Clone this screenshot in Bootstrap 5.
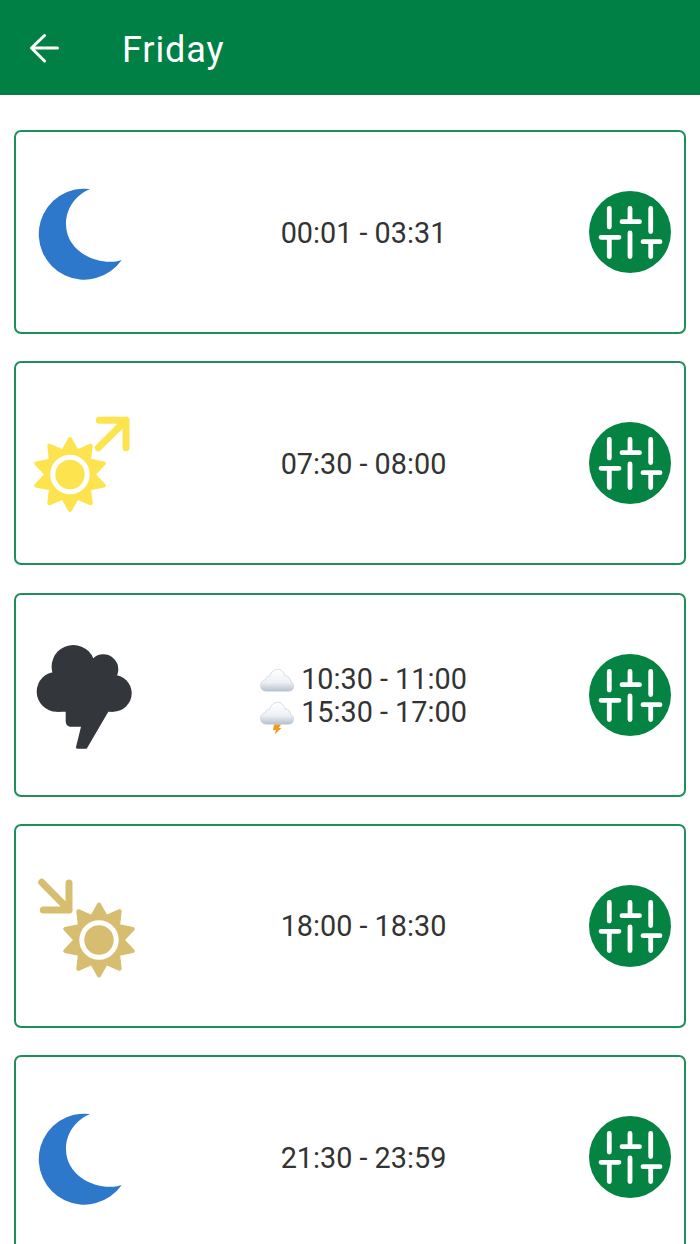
<!DOCTYPE html>
<html lang="en">
<head>
<meta charset="utf-8">
<title>Friday</title>
<link href="https://cdn.jsdelivr.net/npm/bootstrap@5.3.0/dist/css/bootstrap.min.css" rel="stylesheet">
<style>
html, body { height: 100%; overflow: hidden; }
body { font-family: Roboto, "Liberation Sans", sans-serif; background: #fff; color: #333; }
.app-bar { height: 95px; background: #008044; padding: 0; align-items: center; flex-wrap: nowrap; justify-content: flex-start; }
.back-btn { width: 122px; padding: 0 0 0 29px; border: 0; background: none; display: flex; align-items: center; }
.app-title { font-size: 36px; line-height: 1; letter-spacing: .9px; color: #fff; margin: 5px 0 0; font-weight: 400; }
.slot-list { padding: 35px 14px 0; gap: 27.25px; }
.slot-card { height: 204px; flex: none; border: 2px solid #1f8f59; border-radius: 7px; padding: 0 13px 0 20px; --bs-card-bg: #fff; }
.slot-time { font-size: 28.8px; line-height: 33px; color: #333; text-align: center; flex: 1 1 auto; padding: 2px 0 0 2px; }
.slot-line { display: flex; align-items: center; justify-content: center; gap: 7px; height: 33px; }
.slot-icon { width: 100px; height: 100px; flex: none; overflow: visible; }
.tune-btn { width: 82px; height: 82px; flex: none; padding: 0; border: 0; background: none; }
.tune-btn svg { display: block; }
.emoji-cloud { width: 34px; height: 34px; flex: none; margin-top: 3px; overflow: visible; }
</style>
</head>
<body>
<svg width="0" height="0" class="d-block" aria-hidden="true">
  <defs>
    <linearGradient id="cloudFill" x1="0" y1="0" x2="0" y2="1">
      <stop offset="0" stop-color="#ffffff"/>
      <stop offset="0.6" stop-color="#eef1f5"/>
      <stop offset="1" stop-color="#b5c0cf"/>
    </linearGradient>
    <symbol id="moon" viewBox="0 0 100 100">
      <path fill="#2e78cb" d="M54 7A45.5 45.5 0 1 0 85.700 78C66 85 30 72 30 42 30 26 40 13 54 7Z"/>
    </symbol>
    <path id="rays" stroke-width="4" stroke-linejoin="round" d="M0-35.500 7-23 20.700-28.800 19-14 33.800-11 23.500 0 33.800 11 19 14 20.700 28.800 7 23 0 35.500-7 23-20.700 28.800-19 14-33.800 11-23.500 0-33.800-11-19-14-20.700-28.800-7-23Z"/>
    <symbol id="tune" viewBox="0 0 82 82">
      <circle cx="41" cy="41" r="41" fill="#058342"/>
      <path fill="none" stroke="#fff" stroke-width="4.800" stroke-linecap="round" d="M20.300 17.500V36M12 46.300H30M20.300 46.300V65.500M41 17.500V30.700M33 30.700H50.500M41 42V65.500M61.700 17.500V40.500M54 50.700H71M61.700 50.700V65.500"/>
    </symbol>
    <symbol id="emojiCloud" viewBox="0 0 34 34" overflow="visible">
      <path transform="translate(0 -1) scale(1 1.15)" fill="url(#cloudFill)" stroke="#c6ced9" stroke-width=".6" d="M6 24.500C2.600 24.500.5 22.300.5 19.600.5 17 2.400 15 5 14.700 5.700 12.600 7.600 11.300 9.600 11.500 11 7.700 14 5.500 17.500 5.500 21 5.500 23.900 7.700 24.800 11 28.400 11.300 30.500 13.600 30.800 16.200 32.700 16.800 33.600 18.500 33.600 20.300 33.600 22.700 31.700 24.500 29 24.500Z"/>
    </symbol>
  </defs>
</svg>

<nav class="navbar app-bar">
  <button class="back-btn" type="button" aria-label="Back">
    <svg width="30" height="30" viewBox="0 0 30 30" fill="none" stroke="#fff" stroke-width="3" stroke-linecap="round" stroke-linejoin="round"><path d="M2.500 15H28.500M15.500 2.500 2.500 15 15.500 28"/></svg>
  </button>
  <h1 class="app-title">Friday</h1>
</nav>

<main class="d-flex flex-column slot-list">
  <div class="card flex-row align-items-center slot-card">
    <svg class="slot-icon"><use href="#moon"/></svg>
    <div class="slot-time"><div class="slot-line">00:01 - 03:31</div></div>
    <button class="tune-btn" type="button" aria-label="Adjust"><svg width="82" height="82"><use href="#tune"/></svg></button>
  </div>

  <div class="card flex-row align-items-center slot-card">
    <svg class="slot-icon" viewBox="0 0 100 100">
      <g transform="translate(34 61.5)">
        <use href="#rays" fill="#fde44f" stroke="#fde44f"/>
        <circle r="17.200" fill="none" stroke="#fff" stroke-width="5"/>
      </g>
      <path fill="none" stroke="#fde44f" stroke-width="7" stroke-linecap="round" stroke-linejoin="round" d="M62.300 34.800 90 7.200M63.300 7.200H90V34.800"/>
    </svg>
    <div class="slot-time"><div class="slot-line">07:30 - 08:00</div></div>
    <button class="tune-btn" type="button" aria-label="Adjust"><svg width="82" height="82"><use href="#tune"/></svg></button>
  </div>

  <div class="card flex-row align-items-center slot-card">
    <svg class="slot-icon" viewBox="0 0 100 100" fill="#33363b">
      <circle cx="37.300" cy="21.700" r="21.700"/>
      <circle cx="67.300" cy="24.300" r="15"/>
      <circle cx="20.700" cy="46.700" r="20"/>
      <circle cx="77.300" cy="48.300" r="18.400"/>
      <path d="M20.700 30H77.300V66.700H72.300L50.700 103.700H41.500Q39.500 103.700 40 102L45 81.700H34Q29.700 81 29.700 76V66.700H20.700Z"/>
    </svg>
    <div class="slot-time">
      <div class="slot-line"><svg class="emoji-cloud"><use href="#emojiCloud"/></svg>10:30 - 11:00</div>
      <div class="slot-line"><svg class="emoji-cloud" viewBox="0 0 34 34"><use href="#emojiCloud" width="34" height="34"/><path fill="#f19a1f" d="M14 27.500H21L18.800 31H21.500L14.500 37.500 16 33H13Z"/></svg>15:30 - 17:00</div>
    </div>
    <button class="tune-btn" type="button" aria-label="Adjust"><svg width="82" height="82"><use href="#tune"/></svg></button>
  </div>

  <div class="card flex-row align-items-center slot-card">
    <svg class="slot-icon" viewBox="0 0 100 100">
      <g transform="translate(63 64)">
        <use href="#rays" fill="#d6bd6f" stroke="#d6bd6f"/>
        <circle r="17.200" fill="none" stroke="#fff" stroke-width="5"/>
      </g>
      <path fill="none" stroke="#d6bd6f" stroke-width="7" stroke-linecap="round" stroke-linejoin="round" d="M5.700 6.300 33 34M33 7V34H7.300"/>
    </svg>
    <div class="slot-time"><div class="slot-line">18:00 - 18:30</div></div>
    <button class="tune-btn" type="button" aria-label="Adjust"><svg width="82" height="82"><use href="#tune"/></svg></button>
  </div>

  <div class="card flex-row align-items-center slot-card">
    <svg class="slot-icon"><use href="#moon"/></svg>
    <div class="slot-time"><div class="slot-line">21:30 - 23:59</div></div>
    <button class="tune-btn" type="button" aria-label="Adjust"><svg width="82" height="82"><use href="#tune"/></svg></button>
  </div>
</main>
<script src="https://cdn.jsdelivr.net/npm/bootstrap@5.3.0/dist/js/bootstrap.bundle.min.js"></script>
</body>
</html>
